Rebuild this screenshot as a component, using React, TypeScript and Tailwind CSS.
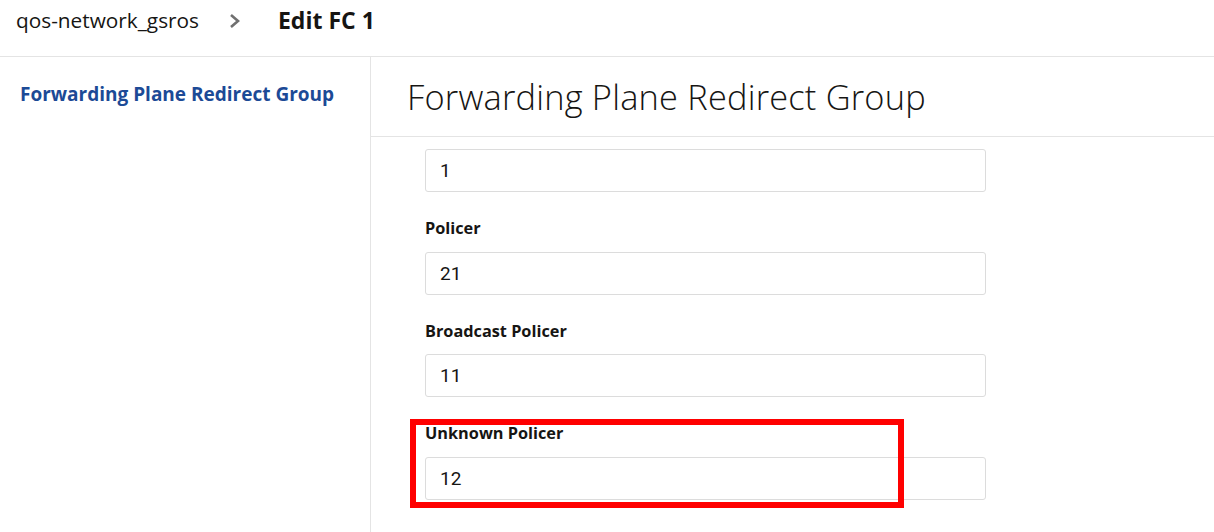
const fields = [
  { label: '', value: '1' },
  { label: 'Policer', value: '21' },
  { label: 'Broadcast Policer', value: '11' },
  { label: 'Unknown Policer', value: '12' },
]

function Field({ label, value }: { label: string; value: string }) {
  return (
    <div className="flex flex-col">
      {label && (
        <label className="mt-[26px] mb-[13px] text-[16.3px] leading-[20.5px] font-bold text-[#161513]">{label}</label>
      )}
      <input
        readOnly
        value={value}
        className="h-[43px] w-[561px] rounded-[3px] border border-[#dcdcdc] bg-white px-[14px] text-[19px] text-[#161513] outline-none"
        style={{ fontFamily: 'Roboto, Arial, sans-serif' }}
      />
    </div>
  )
}

export default function App() {
  return (
    <div
      className="flex h-[532px] w-[1214px] flex-col overflow-hidden bg-white text-[#161513]"
      style={{ fontFamily: '"Open Sans", "Noto Sans", sans-serif' }}
    >
      <header className="flex h-[57px] shrink-0 items-start border-b border-[#e4e4e4] pt-[5px] pl-4">
        <span className="text-[20.8px] leading-[30px]">qos-network_gsros</span>
        <svg className="mt-[8px] ml-[29px]" width="14" height="16" viewBox="0 0 14 16" fill="none">
          <polyline points="3,2 10,8 3,14" stroke="#707070" strokeWidth="2.6" />
        </svg>
        <span className="ml-[36px] text-[23px] leading-[30px] font-bold">Edit FC 1</span>
      </header>

      <div className="flex flex-1">
        <aside className="w-[371px] shrink-0 border-r border-[#e4e4e4] px-5 pt-[25px]">
          <a className="text-[19px] leading-[24px] font-bold text-[#1c4a96]">Forwarding Plane Redirect Group</a>
        </aside>

        <main className="flex-1">
          <div className="flex h-[80px] items-center border-b border-[#e4e4e4] pl-[36px]">
            <h1 className="text-[34.4px] font-light tracking-[0.2px]">Forwarding Plane Redirect Group</h1>
          </div>

          <div className="relative pt-[12px] pl-[54px]">
            {fields.map((f) => (
              <Field key={f.value} label={f.label} value={f.value} />
            ))}
            {/* highlight box */}
            <div className="pointer-events-none absolute top-[282px] left-[39px] h-[89px] w-[494px] border-[6px] border-[#ff0000]" />
          </div>
        </main>
      </div>
    </div>
  )
}
